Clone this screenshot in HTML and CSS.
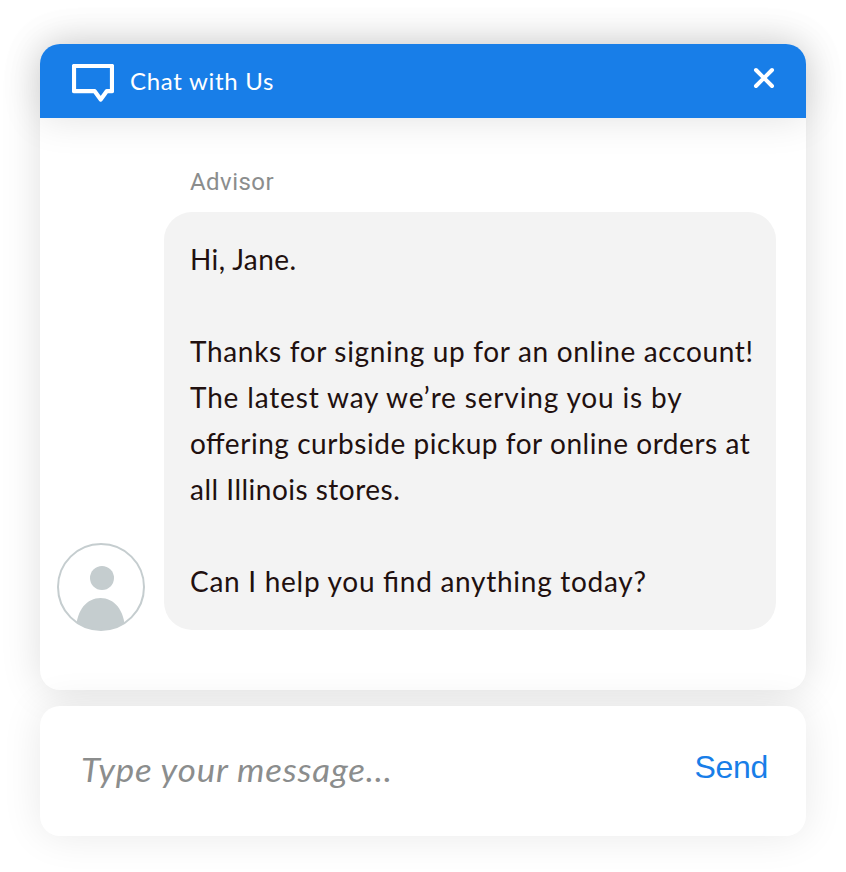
FILE: index.html
```html
<!DOCTYPE html>
<html lang="en">
<head>
<meta charset="utf-8">
<title>Chat with Us</title>
<link rel="stylesheet" href="styles.css">
</head>
<body>
<main class="widget">
<section class="chat">
<header class="header">
<svg class="chat-icon" width="42" height="38" viewBox="0 0 42 38"><path d="M2 2H40V27.200H34.700L28.700 35.500L22.700 27.200H2Z" fill="none" stroke="#fff" stroke-width="4.200" stroke-linejoin="round"/></svg>
<h1 class="title">Chat with Us</h1>
<button class="close" aria-label="Close"><svg width="22" height="22" viewBox="0 0 22 22"><path d="M3 3L19 19M19 3L3 19" stroke="#fff" stroke-width="4" stroke-linecap="round"/></svg></button>
</header>
<div class="messages">
<div class="sender">Advisor</div>
<div class="row">
<svg class="avatar" width="88" height="88" viewBox="0 0 88 88"><defs><clipPath id="disc"><circle cx="44" cy="44" r="43"/></clipPath></defs><g fill="#c5cdcf" clip-path="url(#disc)"><circle cx="45" cy="35" r="12"/><path d="M19 88C19 67 30 55 43.500 55S68 67 68 88Z"/></g><circle cx="44" cy="44" r="43" fill="none" stroke="#c5cdcf" stroke-width="2"/></svg>
<div class="bubble">
<p class="greeting">Hi, Jane.</p><p>&nbsp;</p>
<p class="thanks">Thanks for signing up for an online account!</p>
<p class="latest">The latest way we’re serving you is by</p>
<p class="offer">offering curbside pickup for online orders at</p>
<p class="stores">all Illinois stores.</p><p>&nbsp;</p>
<p class="question">Can I help you find anything today?</p>
</div>
</div>
</div>
</section>
<footer class="composer"><span class="placeholder">Type your message...</span><button class="send">Send</button></footer>
</main>
</body>
</html>
```
FILE: styles.css
```css
* { box-sizing: border-box; }
body { margin: 0; background: #fff; font-family: Lato, sans-serif; }
button { border: 0; padding: 0; background: none; }
.widget { padding: 44px 40px 36px; height: 872px; }
.chat { height: 646px; border-radius: 20px; background: #fff; box-shadow: 0 0 40px rgba(0,0,0,.13); }
.header { height: 74px; padding: 0 31px 0 32px; display: flex; align-items: center; border-radius: 20px 20px 0 0; background: #187ee8; box-shadow: 0 0 40px rgba(0,0,0,.12); }
.chat-icon { margin-top: 3px; }
.title { margin: 0 auto 0 16px; color: #fff; font-size: 24px; line-height: 30px; font-weight: 400; letter-spacing: .7px; }
.close { height: 22px; margin-top: -6px; }
.close svg { display: block; }
.messages { padding: 48px 30px 0 17px; }
.sender { height: 46px; padding-left: 133px; color: #8b8d8d; font: 24px/32px Roboto, sans-serif; letter-spacing: .45px; }
.row { display: flex; align-items: flex-end; gap: 19px; }
.avatar { flex: none; margin-bottom: -1px; }
.bubble { width: 612px; height: 418px; padding: 24px 0 0 26px; border-radius: 28px; background: #f3f3f3; color: #21100f; font-size: 28px; line-height: 46px; white-space: nowrap; font-feature-settings: "liga" 1; }
.bubble p { margin: 0; }
.greeting { letter-spacing: .4px; }
.thanks { letter-spacing: .67px; }
.latest { letter-spacing: .84px; }
.offer { letter-spacing: .55px; }
.stores { letter-spacing: .49px; }
.question { letter-spacing: .72px; }
.composer { height: 130px; margin-top: 16px; padding: 0 38px 0 41px; display: flex; align-items: center; justify-content: space-between; border-radius: 20px; background: #fff; box-shadow: 0 0 40px rgba(0,0,0,.09); }
.placeholder { margin-top: -4px; color: #8b8d8d; font-size: 32px; font-style: italic; letter-spacing: .75px; transform: scaleX(1.09); transform-origin: left; }
.send { margin-top: -8px; color: #187ee8; font: 32px "Liberation Sans", sans-serif; letter-spacing: -.3px; }
```
